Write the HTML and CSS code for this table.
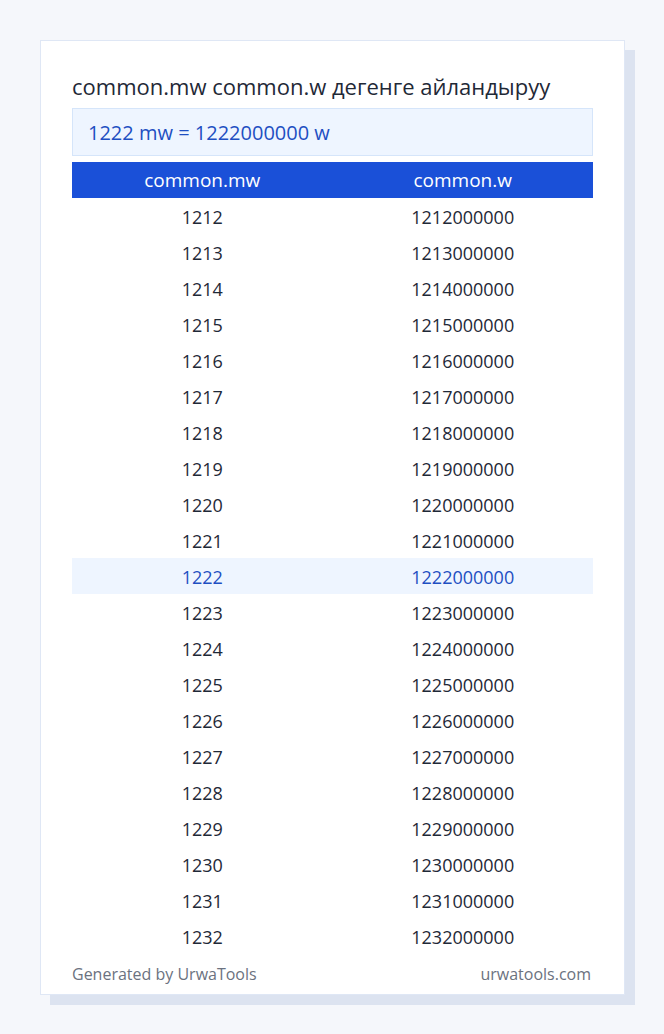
FILE: index.html
```html
<!DOCTYPE html>
<html lang="ky">
<head>
<meta charset="utf-8">
<link rel="stylesheet" href="styles.css">
</head>
<body>
<div class="card">
  <h1 class="title">common.mw common.w дегенге айландыруу</h1>
  <div class="result">1222 mw = 1222000000 w</div>
  <table class="conv">
    <thead><tr><th>common.mw</th><th>common.w</th></tr></thead>
    <tbody>
      <tr><td>1212</td><td>1212000000</td></tr>
      <tr><td>1213</td><td>1213000000</td></tr>
      <tr><td>1214</td><td>1214000000</td></tr>
      <tr><td>1215</td><td>1215000000</td></tr>
      <tr><td>1216</td><td>1216000000</td></tr>
      <tr><td>1217</td><td>1217000000</td></tr>
      <tr><td>1218</td><td>1218000000</td></tr>
      <tr><td>1219</td><td>1219000000</td></tr>
      <tr><td>1220</td><td>1220000000</td></tr>
      <tr><td>1221</td><td>1221000000</td></tr>
      <tr class="hl"><td>1222</td><td>1222000000</td></tr>
      <tr><td>1223</td><td>1223000000</td></tr>
      <tr><td>1224</td><td>1224000000</td></tr>
      <tr><td>1225</td><td>1225000000</td></tr>
      <tr><td>1226</td><td>1226000000</td></tr>
      <tr><td>1227</td><td>1227000000</td></tr>
      <tr><td>1228</td><td>1228000000</td></tr>
      <tr><td>1229</td><td>1229000000</td></tr>
      <tr><td>1230</td><td>1230000000</td></tr>
      <tr><td>1231</td><td>1231000000</td></tr>
      <tr><td>1232</td><td>1232000000</td></tr>
    </tbody>
  </table>
  <div class="footer"><span>Generated by UrwaTools</span><span>urwatools.com</span></div>
</div>
</body>
</html>
```

FILE: styles.css
```css
html, body {
  margin: 0;
  padding: 0;
  background: #f5f7fb;
}
body {
  font-family: "Open Sans", "Noto Sans", sans-serif;
  color: #1f2937;
  padding: 40px;
}
.card {
  width: 521px;
  background: #ffffff;
  border: 1px solid #dfe7f5;
  padding: 31px 31px 8px 31px;
  box-shadow: 10px 10px 0 #dce3f0;
}
.title {
  margin: 0;
  font-size: 22px;
  font-weight: 400;
  line-height: 28px;
  color: #1f2937;
}
.result {
  margin-top: 8px;
  height: 44px;
  padding: 2px 15px 0 15px;
  line-height: 44px;
  background: #eef5ff;
  border: 1px solid #d5e5fa;
  font-size: 20px;
  color: #1e4fc2;
}
.conv {
  margin-top: 6px;
  width: 100%;
  border-collapse: collapse;
  table-layout: fixed;
  font-size: 18px;
}
.conv th {
  background: #1a50d8;
  color: #ffffff;
  font-weight: 400;
  font-size: 19px;
  height: 36px;
  padding: 0;
  text-align: center;
}
.conv td {
  height: 34px;
  padding: 2px 0 0 0;
  line-height: 34px;
  text-align: center;
  color: #1f2937;
}
.conv tr.hl td {
  background: #eef5ff;
  color: #1e4fc2;
}
.footer {
  display: flex;
  justify-content: space-between;
  padding-top: 8px;
  line-height: 24px;
  font-size: 16px;
  color: #6b7280;
  padding-right: 2px;
}
```
